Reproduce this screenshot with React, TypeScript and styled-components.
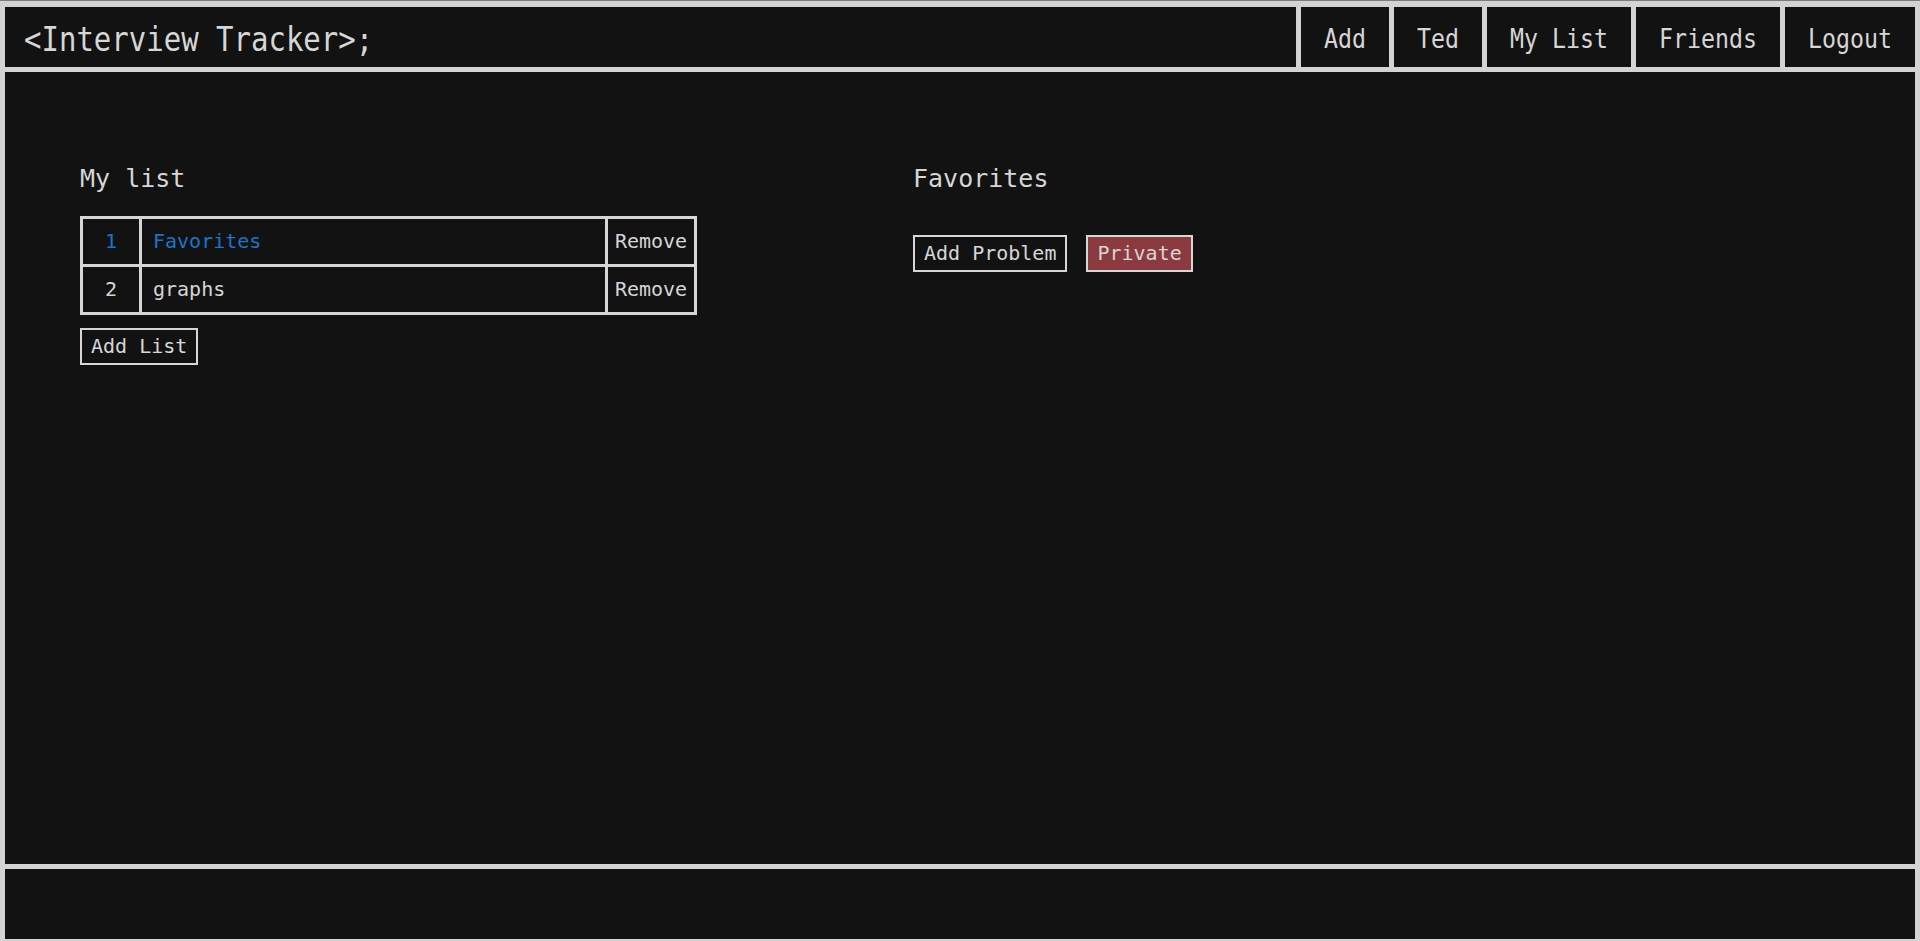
import React from "react";
import styled, { createGlobalStyle } from "styled-components";

const GlobalStyle = createGlobalStyle`
  html, body {
    margin: 0;
    padding: 0;
    background: #d3d3d3;
  }
  * {
    box-sizing: border-box;
  }
`;

interface ListItem {
  id: number;
  name: string;
}

const lists: ListItem[] = [
  { id: 1, name: "Favorites" },
  { id: 2, name: "graphs" },
];

const navItems = ["Add", "Ted", "My List", "Friends", "Logout"];

const App = () => {
  const selected = 1;
  return (
    <>
      <GlobalStyle />
      <PageWraper>
        <HeaderWraper>
          <TitleWraper>
            <TallText>{"<Interview Tracker>;"}</TallText>
          </TitleWraper>
          {navItems.map((item) => (
            <NavItem key={item}>
              <TallText>{item}</TallText>
            </NavItem>
          ))}
        </HeaderWraper>

        <MainWraper>
          <LeftColumn>
            <Heading>My list</Heading>
            <ListTable>
              <tbody>
                {lists.map((list) => (
                  <tr key={list.id}>
                    <IndexCell active={list.id === selected}>{list.id}</IndexCell>
                    <NameCell active={list.id === selected}>{list.name}</NameCell>
                    <ActionCell>
                      <RemoveButton>Remove</RemoveButton>
                    </ActionCell>
                  </tr>
                ))}
              </tbody>
            </ListTable>
            <AddListWraper>
              <OutlineButton>Add List</OutlineButton>
            </AddListWraper>
          </LeftColumn>

          <RightColumn>
            <Heading>Favorites</Heading>
            <ButtonRow>
              <OutlineButton>Add Problem</OutlineButton>
              <OutlineButton danger>Private</OutlineButton>
            </ButtonRow>
          </RightColumn>
        </MainWraper>

        <FooterWraper />
      </PageWraper>
    </>
  );
};

const PageWraper = styled.div`
  height: 100vh;
  border-top: 1px solid #7d7d7d;
  padding: 6px 5px 2px 5px;
  display: grid;
  grid-template-rows: 60px 1fr 70px;
  gap: 5px;
  font-family: "DejaVu Sans Mono", "Liberation Mono", monospace;
  color: #d6d6d6;
`;

const HeaderWraper = styled.header`
  display: flex;
  gap: 5px;
  background: #d3d3d3;
`;

const TitleWraper = styled.div`
  flex: 1;
  background: #121212;
  display: flex;
  align-items: center;
  padding: 3px 0 0 19px;
  font-size: 29px;
`;

const TallText = styled.span`
  display: inline-block;
  transform: scaleY(1.18);
  white-space: pre;
`;

const NavItem = styled.div`
  background: #121212;
  display: flex;
  align-items: center;
  padding: 0 23px;
  font-size: 23.25px;
  cursor: pointer;
`;

const MainWraper = styled.main`
  background: #121212;
  display: flex;
  padding: 92px 75px 0 75px;
`;

const LeftColumn = styled.section`
  width: 833px;
  display: flex;
  flex-direction: column;
  align-items: flex-start;
`;

const RightColumn = styled.section`
  flex: 1;
  display: flex;
  flex-direction: column;
  align-items: flex-start;
`;

const Heading = styled.h2`
  margin: 0;
  font-size: 25px;
  font-weight: normal;
  line-height: 29px;
`;

const ListTable = styled.table`
  margin-top: 23px;
  border-spacing: 0;
  table-layout: fixed;
  width: 617px;
  border-top: 3px solid #d6d6d6;
  border-left: 3px solid #d6d6d6;
  font-size: 20px;
  line-height: 23px;

  td {
    border-right: 3px solid #d6d6d6;
    border-bottom: 3px solid #d6d6d6;
    padding: 11px 0;
  }
`;

interface CellProps {
  active?: boolean;
}

const IndexCell = styled.td<CellProps>`
  width: 59px;
  text-align: center;
  color: ${(props) => (props.active ? "#1b74c9" : "#d6d6d6")};
`;

const NameCell = styled.td<CellProps>`
  width: 466px;
  padding-left: 11px !important;
  color: ${(props) => (props.active ? "#1b74c9" : "#d6d6d6")};
`;

const ActionCell = styled.td`
  width: 89px;
  text-align: center;
`;

const RemoveButton = styled.button`
  background: none;
  border: none;
  padding: 0;
  font-family: inherit;
  font-size: 20px;
  line-height: 23px;
  color: #d6d6d6;
  cursor: pointer;
`;

const AddListWraper = styled.div`
  margin-top: 13px;
`;

const ButtonRow = styled.div`
  margin-top: 42px;
  display: flex;
  gap: 19px;
`;

interface OutlineButtonProps {
  danger?: boolean;
}

const OutlineButton = styled.button<OutlineButtonProps>`
  background: ${(props) => (props.danger ? "#8b3a3f" : "#121212")};
  border: 2px solid #d6d6d6;
  padding: 5px 9px;
  font-family: "DejaVu Sans Mono", "Liberation Mono", monospace;
  font-size: 20px;
  line-height: 23px;
  color: #d6d6d6;
  cursor: pointer;
`;

const FooterWraper = styled.footer`
  background: #121212;
`;

export default App;
